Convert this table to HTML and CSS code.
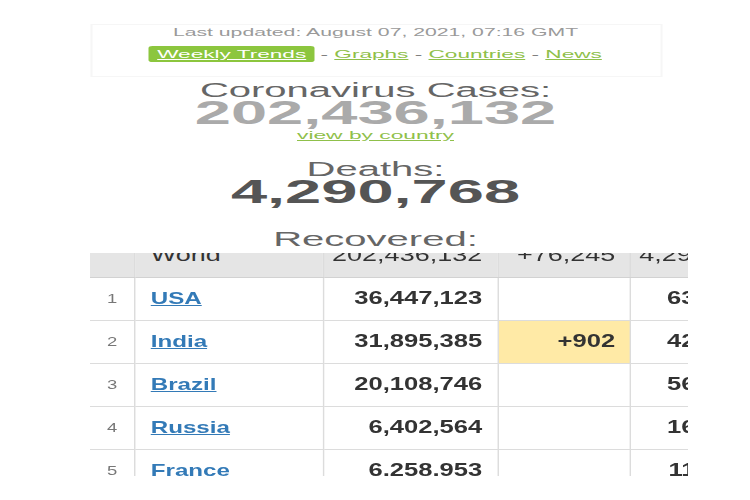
FILE: index.html
```html
<!DOCTYPE html>
<html lang="en">
<head>
    <meta charset="UTF-8">
    <meta name="viewport" content="width=device-width, initial-scale=1.0">
    <title>Coronavirus Cases</title>
    <link rel="stylesheet" href="styles.css">
</head>
<body>
    <div class="top">
        <div class="update-box">
            <div class="updated">Last updated: August 07, 2021, 07:16 GMT</div>
            <div class="nav">
                <a class="pill" href="#">Weekly Trends</a> - <a href="#">Graphs</a> - <a href="#">Countries</a> - <a href="#">News</a>
            </div>
        </div>
        <h1 class="stat-label first">Coronavirus Cases:</h1>
        <div class="stat-number cases">202,436,132</div>
        <a class="by-country" href="#">view by country</a>
        <h1 class="stat-label deaths-label">Deaths:</h1>
        <div class="stat-number deaths">4,290,768</div>
        <h1 class="stat-label recovered-label">Recovered:</h1>
    </div>
    <div class="table-clip">
        <table class="countries">
            <colgroup>
                <col class="c-rank">
                <col class="c-name">
                <col class="c-total">
                <col class="c-new">
                <col class="c-deaths">
            </colgroup>
            <tr class="world">
                <td></td>
                <td class="name">World</td>
                <td class="num">202,436,132</td>
                <td class="num">+76,245</td>
                <td class="num">4,290,768</td>
            </tr>
            <tr>
                <td class="rank">1</td>
                <td class="name"><a href="#">USA</a></td>
                <td class="num">36,447,123</td>
                <td class="num"></td>
                <td class="num">636,427</td>
            </tr>
            <tr>
                <td class="rank">2</td>
                <td class="name"><a href="#">India</a></td>
                <td class="num">31,895,385</td>
                <td class="num new">+902</td>
                <td class="num">427,371</td>
            </tr>
            <tr>
                <td class="rank">3</td>
                <td class="name"><a href="#">Brazil</a></td>
                <td class="num">20,108,746</td>
                <td class="num"></td>
                <td class="num">561,807</td>
            </tr>
            <tr>
                <td class="rank">4</td>
                <td class="name"><a href="#">Russia</a></td>
                <td class="num">6,402,564</td>
                <td class="num"></td>
                <td class="num">163,301</td>
            </tr>
            <tr>
                <td class="rank">5</td>
                <td class="name"><a href="#">France</a></td>
                <td class="num">6,258,953</td>
                <td class="num"></td>
                <td class="num">112,193</td>
            </tr>
        </table>
    </div>
</body>
</html>
```

FILE: styles.css
```css
body {
    margin: 0;
    background: #ffffff;
    font-family: "Liberation Sans", Arial, sans-serif;
    overflow: hidden;
}
/* the screenshot is stretched sideways, so the header is too */
.top {
    width: 375px;
    margin: 0 auto;
    text-align: center;
    transform: scaleX(2);
}
.update-box {
    width: 284px;
    margin: 24px auto 0;
    border: 1px solid #f6f6f6;
    padding: 0 0 14px;
}
.updated {
    font-size: 10.6px;
    line-height: 14px;
    color: #9a9a9a;
}
.nav {
    margin-top: 7px;
    font-size: 11.3px;
    line-height: 16px;
    color: #777;
}
.nav a {
    color: #8fc04a;
}
.nav .pill {
    display: inline-block;
    background: #8cc63e;
    color: #ffffff;
    padding: 0 4px;
    border-radius: 2px;
}
.stat-label {
    margin: 0;
    font-size: 20px;
    font-weight: normal;
    line-height: 20px;
    color: #666;
}
.stat-label.first {
    margin-top: 3px;
}
.stat-number {
    font-size: 32.5px;
    font-weight: bold;
    line-height: 26px;
}
.cases {
    color: #aaa;
}
.deaths {
    color: #555;
}
.by-country {
    display: block;
    margin-top: 2px;
    font-size: 11.4px;
    line-height: 14px;
    color: #8fc04a;
}
.deaths-label {
    margin-top: 17px;
}
.recovered-label {
    margin-top: 24px;
}
.table-clip {
    width: 598px;
    height: 223px;
    margin: 4px 0 0 90px;
    overflow: hidden;
}
.countries {
    width: 482px;
    margin-top: -19px;
    border-collapse: collapse;
    table-layout: fixed;
    transform: scaleX(1.42);
    transform-origin: 0 0;
}
.c-rank { width: 31.7px; }
.c-name { width: 132.4px; }
.c-total { width: 123.2px; }
.c-new { width: 93.7px; }
.c-deaths { width: 101px; }
.countries td {
    box-sizing: border-box;
    height: 43px;
    padding: 0 10.6px;
    border-right: 1px solid #dcdcdc;
    border-bottom: 1px solid #dcdcdc;
    font-size: 18px;
    font-weight: bold;
    color: #333;
    white-space: nowrap;
    overflow: hidden;
}
.countries td.num {
    padding-left: 2px;
    text-align: right;
}
.countries td:last-child {
    border-right: none;
}
.world td {
    background: #e5e5e5;
    border-bottom-color: #d2d2d2;
}
.world td.name,
.world td.num {
    font-weight: normal;
    font-size: 19px;
    color: #333;
}
.countries .rank {
    padding: 0;
    text-align: center;
    font-size: 13px;
    font-weight: normal;
    color: #777;
}
.countries .name a {
    color: #337ab7;
    font-size: 17px;
}
.countries .new {
    background: #ffeaa6;
}
```
